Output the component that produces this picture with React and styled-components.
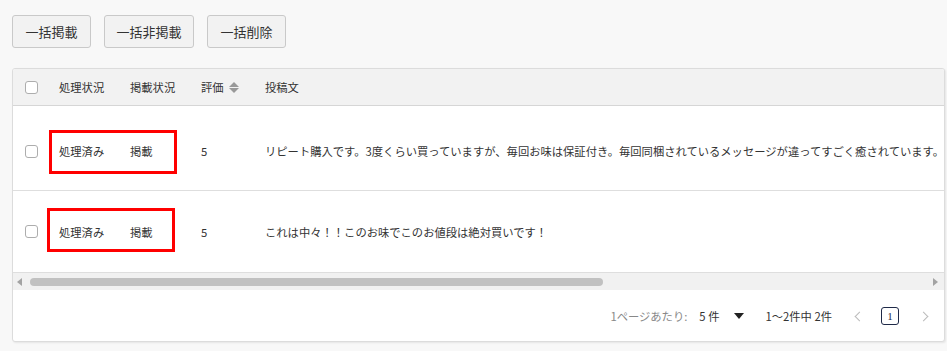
import React from 'react';
import styled, { createGlobalStyle } from 'styled-components';

const GlobalStyle = createGlobalStyle`
  html, body {
    margin: 0;
    padding: 0;
    background: #f8f8f8;
    font-family: "Noto Sans CJK JP", "Noto Sans", sans-serif;
    color: #333;
  }
`;

const Page = styled.div`
  padding: 15px 4px 0 12px;
  box-sizing: border-box;
  width: 947px;
  height: 351px;
  overflow: hidden;
`;

const Toolbar = styled.div`
  display: flex;
  gap: 13px;
`;

const Button = styled.button`
  height: 33px;
  width: ${p => p.w}px;
  padding: 0;
  border: 1px solid #c9c9c9;
  border-radius: 3px;
  background: #f2f2f2;
  color: #333;
  font-family: inherit;
  font-size: 13px;
  line-height: 1;
`;

const Card = styled.div`
  margin-top: 20px;
  width: 931px;
  background: #fff;
  border: 1px solid #dcdcdc;
  border-radius: 3px;
  box-shadow: 1px 1px 2px rgba(0, 0, 0, 0.08);
  overflow: hidden;
`;

const Row = styled.div`
  position: relative;
  display: grid;
  grid-template-columns: 36px 71px 71px 64px 1fr;
  align-items: center;
  height: ${p => p.h}px;
  padding-top: ${p => p.pt || 0}px;
  box-sizing: border-box;
  background: ${p => (p.head ? '#f2f2f2' : '#fff')};
  border-bottom: 1px solid ${p => (p.head ? '#d6d6d6' : '#dedede')};
  font-size: 11.3px;
  white-space: nowrap;
`;

const Cell = styled.div`
  padding-left: 10px;
  display: flex;
  align-items: center;
  gap: 5px;
  color: #333;
`;

const CheckCell = styled.div`
  padding-left: 12px;
  display: flex;
  align-items: center;
`;

const Checkbox = styled.span`
  width: 11px;
  height: 11px;
  border: 1px solid #adadad;
  border-radius: 3px;
  background: #fff;
`;

const SortIcon = styled.span`
  display: inline-flex;
  flex-direction: column;
  gap: 1px;
  &::before, &::after {
    content: '';
    width: 0;
    height: 0;
    border-left: 5px solid transparent;
    border-right: 5px solid transparent;
  }
  &::before { border-bottom: 5px solid #999; }
  &::after { border-top: 5px solid #999; }
`;

const Highlight = styled.div`
  position: absolute;
  left: ${p => p.x}px;
  top: ${p => p.y}px;
  width: 128px;
  height: 44px;
  border: 3px solid #f00;
  box-sizing: border-box;
  pointer-events: none;
`;

const ScrollBar = styled.div`
  display: flex;
  align-items: center;
  height: 17px;
  background: #f1f1f1;
  border-bottom: 1px solid #fff;
  padding: 0 6px 0 4px;
  gap: 8px;
`;

const Arrow = styled.span`
  width: 0;
  height: 0;
  border-top: 4px solid transparent;
  border-bottom: 4px solid transparent;
  ${p => (p.dir === 'left'
    ? 'border-right: 5px solid #a3a3a3;'
    : 'border-left: 5px solid #a3a3a3;')}
`;

const Track = styled.div`
  flex: 1;
  display: flex;
`;

const Thumb = styled.div`
  height: 8px;
  border-radius: 4px;
  background: #c1c1c1;
`;

const Pager = styled.div`
  height: 50px;
  display: flex;
  align-items: center;
  justify-content: flex-end;
  padding-right: 16px;
  font-size: 11.3px;
  color: #333;
`;

const Label = styled.span`
  color: #888;
  margin-right: 12px;
`;

const Caret = styled.span`
  margin: 0 21px 0 15px;
  width: 0;
  height: 0;
  border-left: 5.5px solid transparent;
  border-right: 5.5px solid transparent;
  border-top: 6px solid #222;
`;

const Chevron = styled.span`
  width: 6px;
  height: 6px;
  margin: 0 ${p => p.mr}px 0 ${p => p.ml}px;
  border-left: 1.5px solid #bbb;
  border-bottom: 1.5px solid #bbb;
  transform: rotate(${p => (p.dir === 'left' ? 45 : -135)}deg);
`;

const PageBox = styled.span`
  width: 16px;
  height: 16px;
  border: 1px solid #1f2a48;
  border-radius: 3px;
  display: flex;
  align-items: center;
  justify-content: center;
  font-size: 11px;
  color: #1f2a48;
  font-family: "Liberation Serif", serif;
`;

const rows = [
  {
    status: '処理済み',
    publish: '掲載',
    score: 5,
    text: 'リピート購入です。3度くらい買っていますが、毎回お味は保証付き。毎回同梱されているメッセージが違ってすごく癒されています。',
    h: 85,
    pt: 6,
    box: { x: 36, y: 24 },
  },
  {
    status: '処理済み',
    publish: '掲載',
    score: 5,
    text: 'これは中々！！このお味でこのお値段は絶対買いです！',
    h: 82,
    pt: 0,
    box: { x: 34, y: 17 },
  },
];

const App = () => (
  <Page>
    <GlobalStyle />
    <Toolbar>
      <Button w={79}>一括掲載</Button>
      <Button w={90}>一括非掲載</Button>
      <Button w={79}>一括削除</Button>
    </Toolbar>
    <Card>
      <Row head h={37}>
        <CheckCell><Checkbox /></CheckCell>
        <Cell>処理状況</Cell>
        <Cell>掲載状況</Cell>
        <Cell>評価<SortIcon /></Cell>
        <Cell>投稿文</Cell>
      </Row>
      {rows.map((r, i) => (
        <Row key={i} h={r.h} pt={r.pt}>
          <CheckCell><Checkbox /></CheckCell>
          <Cell>{r.status}</Cell>
          <Cell>{r.publish}</Cell>
          <Cell>{r.score}</Cell>
          <Cell>{r.text}</Cell>
          <Highlight x={r.box.x} y={r.box.y} />
        </Row>
      ))}
      <ScrollBar>
        <Arrow dir="left" />
        <Track><Thumb style={{ width: '64%' }} /></Track>
        <Arrow dir="right" />
      </ScrollBar>
      <Pager>
        <Label>1ページあたり:</Label>
        <span>5&nbsp;件</span>
        <Caret />
        <span>1〜2件中 2件</span>
        <Chevron dir="left" ml={24} mr={18} />
        <PageBox>1</PageBox>
        <Chevron dir="right" ml={21} mr={1} />
      </Pager>
    </Card>
  </Page>
);

export default App;
